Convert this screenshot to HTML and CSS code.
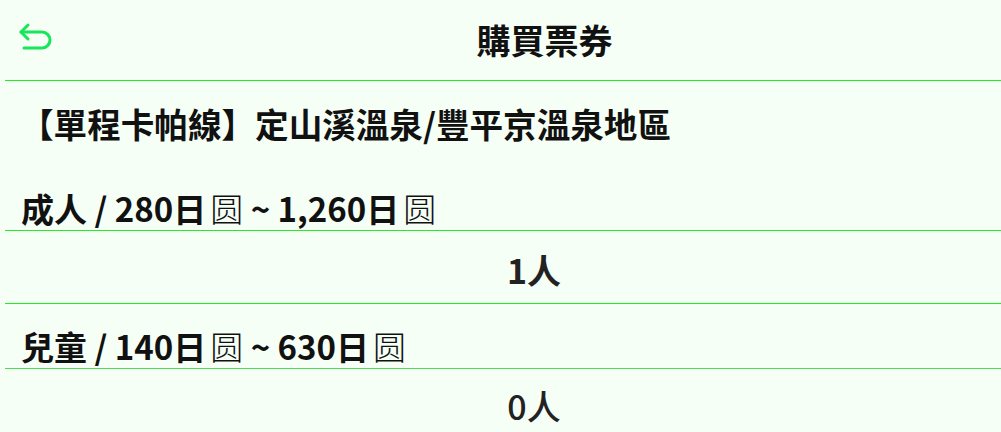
FILE: index.html
```html
<!DOCTYPE html>
<html lang="zh-Hant">
<head>
<meta charset="utf-8">
<title>購買票券</title>
<link rel="stylesheet" href="styles.css">
</head>
<body>
<div class="page">
  <header class="header">
    <div class="back">
      <svg class="back-icon" width="36" height="32" viewBox="18 20 36 32" fill="none" stroke="currentColor" stroke-width="3" stroke-linecap="round" stroke-linejoin="round">
        <path d="M28 23 L21 30 L28 37"/>
        <path d="M21 30 H42 A8 8 0 0 1 42 46 H24"/>
      </svg>
    </div>
    <h1 class="title">購買票券</h1>
  </header>
  <div class="route">【單程卡帕線】定山溪溫泉/豐平京溫泉地區</div>
  <div class="label">成人 / 280日<span class="yen">圆</span> ~ 1,260日<span class="yen">圆</span></div>
  <div class="count">1人</div>
  <div class="label label-2">兒童 / 140日<span class="yen">圆</span> ~ 630日<span class="yen">圆</span></div>
  <div class="count count-zero">0人</div>
</div>
</body>
</html>
```
FILE: styles.css
```css
html, body {
  margin: 0;
  padding: 0;
  background: #f5fff5;
}
body {
  font-family: "Noto Sans CJK TC", "Noto Sans CJK JP", sans-serif;
  color: #1a1a1a;
  overflow: hidden;
}
.page {
  margin-left: 5px;
}
.header {
  display: flex;
  align-items: center;
  height: 80px;
  border-bottom: 1px solid #22ee22;
}
.back {
  width: 83px;
  display: flex;
  align-items: center;
  padding-left: 13px;
  box-sizing: border-box;
  height: 80px;
  color: #17e65a;
}
.back-icon {
  display: block;
  margin-top: -4px;
}
.title {
  flex: 1;
  margin: 0;
  text-align: center;
  font-size: 34px;
  font-weight: 700;
  line-height: 40px;
  color: #111;
}
.route {
  padding: 19px 0 0 15px;
  height: 66px;
  font-size: 33.6px;
  font-weight: 700;
  line-height: 48px;
  color: #111;
}
.label {
  padding: 21px 0 0 16px;
  line-height: 43px;
  font-size: 33px;
  font-weight: 700;
  border-bottom: 1px solid #22ee22;
  color: #111;
}
.label-2 {
  border-bottom-color: #4fdc55;
}
.yen {
  font-family: "Noto Sans CJK SC", sans-serif;
  font-weight: 300;
  margin-left: 4px;
}
.count {
  height: 73px;
  display: flex;
  align-items: center;
  justify-content: center;
  padding-left: 62px;
  padding-top: 4px;
  box-sizing: border-box;
  font-size: 34px;
  font-weight: 700;
  border-bottom: 1px solid #22ee22;
  color: #222;
}
.count-zero {
  font-weight: 500;
  border-bottom: none;
  padding-top: 0;
}
```
